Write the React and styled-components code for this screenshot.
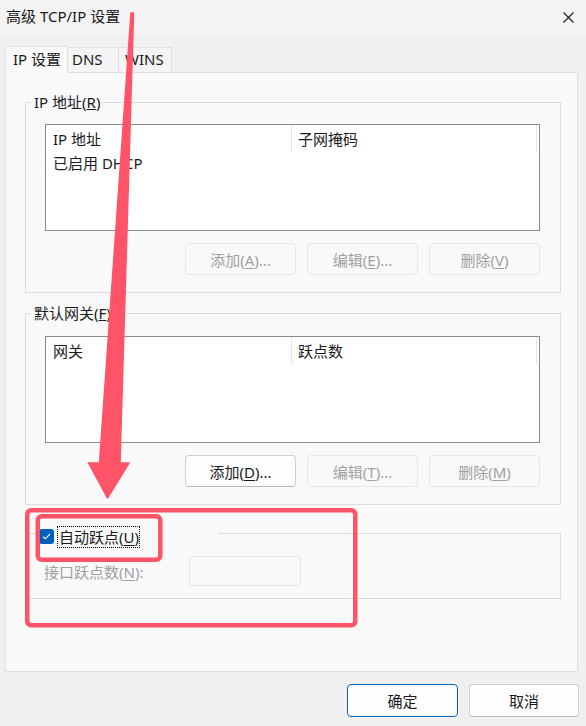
import React from 'react';
import styled, { createGlobalStyle } from 'styled-components';

const GlobalStyle = createGlobalStyle`
  html, body {
    margin: 0;
    padding: 0;
    background: #f0f0f0;
  }
  body {
    font-family: "Noto Sans", "Noto Sans CJK SC", sans-serif;
    font-size: 15px;
    color: #000;
  }
  * {
    box-sizing: border-box;
  }
`;

const Window = styled.div`
  position: relative;
  width: 586px;
  height: 726px;
  display: flex;
  flex-direction: column;
  overflow: hidden;
  background: #f0f0f0;
`;

const TitleBar = styled.div`
  height: 35px;
  flex: none;
  display: flex;
  align-items: center;
  justify-content: space-between;
  padding: 0 12px 3px 6px;
  background: #f3f3f3;
`;

const Title = styled.div`
  font-size: 15px;
  line-height: 20px;
  color: #1a1a1a;
`;

const CloseIcon = styled.svg`
  width: 11px;
  height: 11px;
  margin-top: 3px;
`;

const Content = styled.div`
  flex: 1;
  display: flex;
  flex-direction: column;
  padding: 11px 8px 0 5px;
`;

const TabStrip = styled.div`
  display: flex;
  align-items: flex-end;
  height: 26px;
  position: relative;
  z-index: 1;
`;

const Tab = styled.div`
  width: ${(p) => p.$width}px;
  height: ${(p) => (p.$active ? 27 : 25)}px;
  margin-bottom: ${(p) => (p.$active ? -1 : 0)}px;
  margin-left: ${(p) => (p.$first ? 0 : -1)}px;
  padding-left: ${(p) => p.$pad}px;
  border: 1px solid #e0e0e0;
  border-bottom: none;
  background: ${(p) => (p.$active ? '#f9f9f9' : '#f4f4f4')};
  line-height: ${(p) => (p.$active ? 25 : 23)}px;
  color: #1a1a1a;
`;

const Panel = styled.div`
  height: 600px;
  flex: none;
  border: 1px solid #e0e0e0;
  background: #f9f9f9;
  padding-top: 19px;
`;

const Group = styled.fieldset`
  margin: ${(p) => p.$top}px 0 0 19px;
  padding: 0;
  width: 536px;
  min-width: 0;
  border: 1px solid #dcdcdc;
`;

const Legend = styled.legend`
  margin-left: 5px;
  padding: 0 3px;
  height: 20px;
  line-height: 20px;
  color: #1a1a1a;
`;

const GroupBody = styled.div`
  padding: ${(p) => p.$padTop}px 20px 17px 19px;
`;

const ListView = styled.div`
  height: 107px;
  border: 1px solid #8a8a8a;
  background: #fff;
`;

const ListHeader = styled.div`
  display: flex;
  height: 27px;
`;

const HeaderCell = styled.div`
  width: ${(p) => p.$width}px;
  padding-left: ${(p) => p.$pad}px;
  border-right: 1px solid #e5e5e5;
  line-height: 29px;
  color: #1a1a1a;
`;

const ListRow = styled.div`
  padding-left: 7px;
  line-height: 23px;
  color: #1a1a1a;
`;

const ButtonRow = styled.div`
  display: flex;
  justify-content: flex-end;
  gap: 11px;
  margin-top: 12px;
`;

const Button = styled.div`
  width: ${(p) => p.$width || 111}px;
  height: ${(p) => p.$height || 32}px;
  display: flex;
  align-items: center;
  justify-content: center;
  border-radius: 4px;
  font-size: 15px;
  border: 1px solid
    ${(p) => (p.$primary ? '#0067c0' : p.$disabled ? '#e6e6e6' : '#d0d0d0')};
  border-bottom-color: ${(p) =>
    p.$primary ? '#0067c0' : p.$disabled ? '#e6e6e6' : '#b9b9b9'};
  background: ${(p) => (p.$disabled ? '#f9f9f9' : '#fdfdfd')};
  color: ${(p) => (p.$disabled ? '#a0a0a0' : '#1a1a1a')};

  u {
    text-underline-offset: 2px;
  }
`;

const CheckLegend = styled.legend`
  margin-left: 9px;
  padding: 0 0 0 4px;
  width: 183px;
  height: 14px;
`;

const CheckRow = styled.div`
  display: flex;
  align-items: flex-start;
`;

const CheckBox = styled.div`
  width: 15px;
  height: 15px;
  margin-top: 3px;
  border-radius: 3px;
  background: #005fb8;
  display: flex;
  align-items: center;
  justify-content: center;
`;

const CheckLabel = styled.span`
  margin-left: 3px;
  padding: 0 1px 0 2px;
  height: 22px;
  line-height: 22px;
  outline: 1px dotted #000;
  outline-offset: -1px;
  color: #1a1a1a;

  u {
    text-underline-offset: 2px;
  }
`;

const FieldBody = styled.div`
  display: flex;
  align-items: center;
  padding: 16px 0 12px 18px;
`;

const FieldLabel = styled.span`
  width: 145px;
  color: #a0a0a0;

  u {
    text-underline-offset: 2px;
  }
`;

const NumberBox = styled.div`
  width: 112px;
  height: 30px;
  border: 1px solid #e6e6e6;
  border-radius: 3px;
  background: #f9f9f9;
`;

const Footer = styled.div`
  display: flex;
  justify-content: flex-end;
  gap: 11px;
  margin-top: 12px;
  margin-right: -1px;
`;

const Overlay = styled.svg`
  position: absolute;
  left: 0;
  top: 0;
  width: 586px;
  height: 726px;
  pointer-events: none;
  z-index: 5;
`;

const annotRed = '#ff5468';

function AddressList({ col1, col2, row }) {
  return (
    <ListView>
      <ListHeader>
        <HeaderCell $width={246} $pad={7}>
          {col1}
        </HeaderCell>
        <HeaderCell $width={245} $pad={6}>
          {col2}
        </HeaderCell>
      </ListHeader>
      {row && <ListRow>{row}</ListRow>}
    </ListView>
  );
}

function Mn({ before, letter, after }) {
  return (
    <span>
      {before}
      <u>{letter}</u>
      {after}
    </span>
  );
}

export default function App() {
  return (
    <Window>
      <GlobalStyle />
      <TitleBar>
        <Title>高级 TCP/IP 设置</Title>
        <CloseIcon viewBox="0 0 11 11">
          <path d="M0.5 0.5 L10.5 10.5 M10.5 0.5 L0.5 10.5" stroke="#1a1a1a" strokeWidth="1.1" />
        </CloseIcon>
      </TitleBar>

      <Content>
        <TabStrip>
          <Tab $active $first $width={63} $pad={7}>
            IP 设置
          </Tab>
          <Tab $width={52} $pad={4}>
            DNS
          </Tab>
          <Tab $width={54} $pad={6}>
            WINS
          </Tab>
        </TabStrip>

        <Panel>
          <Group $top={0}>
            <Legend>
              <Mn before="IP 地址(" letter="R" after=")" />
            </Legend>
            <GroupBody $padTop={12}>
              <AddressList col1="IP 地址" col2="子网掩码" row="已启用 DHCP" />
              <ButtonRow>
                <Button $disabled>
                  <Mn before="添加(" letter="A" after=")..." />
                </Button>
                <Button $disabled>
                  <Mn before="编辑(" letter="E" after=")..." />
                </Button>
                <Button $disabled>
                  <Mn before="删除(" letter="V" after=")" />
                </Button>
              </ButtonRow>
            </GroupBody>
          </Group>

          <Group $top={10}>
            <Legend>
              <Mn before="默认网关(" letter="F" after=")" />
            </Legend>
            <GroupBody $padTop={13}>
              <AddressList col1="网关" col2="跃点数" />
              <ButtonRow>
                <Button>
                  <Mn before="添加(" letter="D" after=")..." />
                </Button>
                <Button $disabled>
                  <Mn before="编辑(" letter="T" after=")..." />
                </Button>
                <Button $disabled>
                  <Mn before="删除(" letter="M" after=")" />
                </Button>
              </ButtonRow>
            </GroupBody>
          </Group>

          <Group $top={21}>
            <CheckLegend>
              <CheckRow>
                <CheckBox>
                  <svg width="9" height="7" viewBox="0 0 9 7">
                    <path d="M1 3.6 L3.3 5.8 L8 1" fill="none" stroke="#fff" strokeWidth="1.1" />
                  </svg>
                </CheckBox>
                <CheckLabel>
                  自动跃点(<u>U</u>)
                </CheckLabel>
              </CheckRow>
            </CheckLegend>
            <FieldBody>
              <FieldLabel>
                接口跃点数(<u>N</u>):
              </FieldLabel>
              <NumberBox />
            </FieldBody>
          </Group>
        </Panel>

        <Footer>
          <Button $primary $width={111} $height={33}>
            确定
          </Button>
          <Button $width={110} $height={33}>
            取消
          </Button>
        </Footer>
      </Content>

      <Overlay viewBox="0 0 586 726">
        <polygon
          points="131,13 133.5,13 120,463 129,463 107.5,498 88.5,463 99.5,463"
          fill={annotRed}
          stroke={annotRed}
          strokeWidth="1.5"
          strokeLinejoin="round"
        />
        <rect x="27.25" y="510.25" width="328" height="115" rx="4" fill="none" stroke={annotRed} strokeWidth="4.5" />
        <rect x="37.75" y="516.25" width="122.5" height="43.5" rx="4" fill="none" stroke={annotRed} strokeWidth="4.5" />
      </Overlay>
    </Window>
  );
}
